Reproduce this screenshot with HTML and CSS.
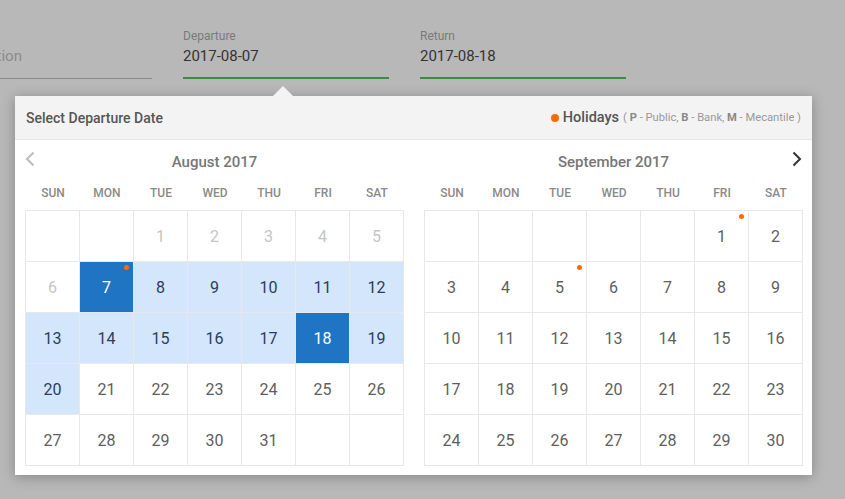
FILE: index.html
```html
<!DOCTYPE html>
<html>
<head>
<meta charset="utf-8">
<link rel="stylesheet" href="styles.css">
</head>
<body>
<div class="fields">
  <div class="field">
    <div class="label"></div>
    <div class="value placeholder">Destination</div>
  </div>
  <div class="field active">
    <div class="label">Departure</div>
    <div class="value">2017-08-07</div>
  </div>
  <div class="field active">
    <div class="label">Return</div>
    <div class="value">2017-08-18</div>
  </div>
</div>

<div class="popup">
  <div class="caret"></div>
  <div class="popup-head">
    <div class="title">Select Departure Date</div>
    <div class="legend"><span class="ldot"></span><span class="lname">Holidays</span><span class="lnote">( <b>P</b> - Public, <b>B</b> - Bank, <b>M</b> - Mecantile )</span></div>
  </div>
  <div class="months">
    <div class="month">
      <div class="mhead">
        <svg class="nav prev" width="10" height="16" viewBox="0 0 10 16"><path d="M8.5 1.5 L2 8 L8.5 14.5" fill="none" stroke="#bdbdbd" stroke-width="2"/></svg>
        <span class="mtitle">August 2017</span>
      </div>
      <div class="wdays"><span>SUN</span><span>MON</span><span>TUE</span><span>WED</span><span>THU</span><span>FRI</span><span>SAT</span></div>
      <div class="grid">
        <div class="c"></div><div class="c"></div><div class="c dis">1</div><div class="c dis">2</div><div class="c dis">3</div><div class="c dis">4</div><div class="c dis">5</div>
        <div class="c dis">6</div><div class="c sel">7<i class="dot"></i></div><div class="c rng">8</div><div class="c rng">9</div><div class="c rng">10</div><div class="c rng">11</div><div class="c rng">12</div>
        <div class="c rng">13</div><div class="c rng">14</div><div class="c rng">15</div><div class="c rng">16</div><div class="c rng">17</div><div class="c sel">18</div><div class="c rng">19</div>
        <div class="c rng">20</div><div class="c">21</div><div class="c">22</div><div class="c">23</div><div class="c">24</div><div class="c">25</div><div class="c">26</div>
        <div class="c">27</div><div class="c">28</div><div class="c">29</div><div class="c">30</div><div class="c">31</div><div class="c"></div><div class="c"></div>
      </div>
    </div>
    <div class="month">
      <div class="mhead">
        <span class="mtitle">September 2017</span>
        <svg class="nav next" width="10" height="16" viewBox="0 0 10 16"><path d="M1.5 1.5 L8 8 L1.5 14.5" fill="none" stroke="#333" stroke-width="2"/></svg>
      </div>
      <div class="wdays"><span>SUN</span><span>MON</span><span>TUE</span><span>WED</span><span>THU</span><span>FRI</span><span>SAT</span></div>
      <div class="grid">
        <div class="c"></div><div class="c"></div><div class="c"></div><div class="c"></div><div class="c"></div><div class="c">1<i class="dot"></i></div><div class="c">2</div>
        <div class="c">3</div><div class="c">4</div><div class="c">5<i class="dot"></i></div><div class="c">6</div><div class="c">7</div><div class="c">8</div><div class="c">9</div>
        <div class="c">10</div><div class="c">11</div><div class="c">12</div><div class="c">13</div><div class="c">14</div><div class="c">15</div><div class="c">16</div>
        <div class="c">17</div><div class="c">18</div><div class="c">19</div><div class="c">20</div><div class="c">21</div><div class="c">22</div><div class="c">23</div>
        <div class="c">24</div><div class="c">25</div><div class="c">26</div><div class="c">27</div><div class="c">28</div><div class="c">29</div><div class="c">30</div>
      </div>
    </div>
  </div>
</div>
</body>
</html>
```

FILE: styles.css
```css
html, body {
  margin: 0;
  padding: 0;
}
body {
  background: #b8b8b8;
  font-family: Roboto, "Noto Sans", sans-serif;
  width: 845px;
  height: 499px;
  overflow: hidden;
  position: relative;
}
.fields {
  display: flex;
  gap: 31px;
  margin-left: -54px;
  padding-top: 29px;
}
.field {
  width: 206px;
  border-bottom: 1px solid #8a8a8a;
  height: 50px;
  box-sizing: border-box;
}
.field.active {
  border-bottom: 2px solid #3f8a48;
}
.label {
  font-size: 12px;
  line-height: 14px;
  height: 14px;
  color: #7a7a7a;
}
.value {
  font-size: 15px;
  line-height: 20px;
  margin-top: 3px;
  color: #333;
}
.value.placeholder {
  color: #8c8c8c;
}
.popup {
  position: absolute;
  left: 15px;
  top: 96px;
  width: 797px;
  height: 379px;
  background: #fff;
  box-shadow: 0 2px 12px rgba(0,0,0,0.28);
}
.caret {
  position: absolute;
  left: 258px;
  top: -10px;
  width: 0;
  height: 0;
  border-left: 10px solid transparent;
  border-right: 10px solid transparent;
  border-bottom: 10px solid #f3f3f3;
}
.popup-head {
  height: 43px;
  background: #f3f3f3;
  border-bottom: 1px solid #e6e6e6;
  display: flex;
  align-items: center;
  justify-content: space-between;
  padding: 0 11px;
}
.title {
  font-size: 14px;
  font-weight: 500;
  color: #555;
}
.legend {
  display: flex;
  align-items: center;
}
.ldot {
  width: 8px;
  height: 8px;
  border-radius: 50%;
  background: #ff6a00;
  margin-right: 4px;
}
.lname {
  font-size: 14.5px;
  font-weight: 500;
  color: #555;
}
.lnote {
  font-size: 11.2px;
  color: #999;
  margin-left: 4px;
}
.lnote b {
  font-weight: 700;
  color: #888;
}
.months {
  display: flex;
  gap: 20px;
  padding: 12px 10px 0 10px;
}
.month {
  width: 379px;
}
.mhead {
  height: 20px;
  position: relative;
  display: flex;
  justify-content: center;
  align-items: center;
}
.mtitle {
  font-size: 15px;
  font-weight: 500;
  color: #777;
  line-height: 20px;
}
.nav {
  position: absolute;
  top: -1px;
}
.nav.prev { left: 0; }
.nav.next { right: 1px; }
.wdays {
  display: grid;
  grid-template-columns: repeat(7, 54px);
  padding-left: 1px;
  padding-top: 3px;
  height: 35px;
  line-height: 36px;
  font-size: 12px;
  font-weight: 500;
  color: #8a8a8a;
  text-align: center;
}
.grid {
  display: grid;
  grid-template-columns: repeat(7, 54px);
  grid-auto-rows: 51px;
  border-top: 1px solid #e8e8e8;
  border-left: 1px solid #e8e8e8;
  width: 379px;
  box-sizing: border-box;
}
.c {
  position: relative;
  border-right: 1px solid #e8e8e8;
  border-bottom: 1px solid #e8e8e8;
  display: flex;
  align-items: center;
  justify-content: center;
  font-size: 16px;
  color: #5e5e5e;
}
.c.dis { color: #c6c6c6; }
.c.rng { background: #d4e6fc; color: #2a3d5c; }
.c.sel { background: #1f74c3; color: #fff; }
.dot {
  position: absolute;
  top: 3px;
  right: 4px;
  width: 5px;
  height: 5px;
  border-radius: 50%;
  background: #ff6a00;
}
```
